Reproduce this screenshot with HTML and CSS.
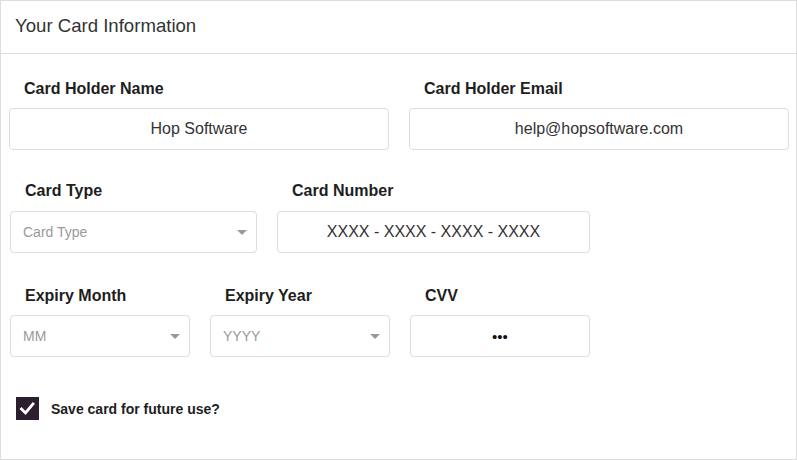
FILE: index.html
```html
<!DOCTYPE html>
<html lang="en">
<head>
<meta charset="utf-8">
<title>Your Card Information</title>
<link rel="stylesheet" href="styles.css">
</head>
<body>
<div class="card">
  <div class="card-header">Your Card Information</div>
  <div class="card-body">
    <div class="row row-1">
      <div class="field w380">
        <label class="label">Card Holder Name</label>
        <input class="control" type="text" value="Hop Software">
      </div>
      <div class="field w380">
        <label class="label">Card Holder Email</label>
        <input class="control" type="text" value="help@hopsoftware.com">
      </div>
    </div>
    <div class="row row-2">
      <div class="field w247">
        <label class="label">Card Type</label>
        <div class="select-wrap">
          <select class="control select"><option>Card Type</option></select>
        </div>
      </div>
      <div class="field w313">
        <label class="label">Card Number</label>
        <input class="control" type="text" value="XXXX - XXXX - XXXX - XXXX">
      </div>
    </div>
    <div class="row row-3">
      <div class="field w180">
        <label class="label">Expiry Month</label>
        <div class="select-wrap">
          <select class="control select"><option>MM</option></select>
        </div>
      </div>
      <div class="field w180">
        <label class="label">Expiry Year</label>
        <div class="select-wrap">
          <select class="control select"><option>YYYY</option></select>
        </div>
      </div>
      <div class="field w180">
        <label class="label">CVV</label>
        <input class="control" type="password" value="123">
      </div>
    </div>
    <div class="save-row">
      <span class="checkbox">
        <svg width="23" height="23" viewBox="0 0 23 23"><path d="M5.5 12 L9.5 16 L17 7" fill="none" stroke="#fff" stroke-width="2.8" stroke-linecap="square"/></svg>
      </span>
      <span class="save-label">Save card for future use?</span>
    </div>
  </div>
</div>
</body>
</html>
```
FILE: styles.css
```css
* { box-sizing: border-box; }
html, body { margin: 0; padding: 0; background: #fff; }
body { font-family: "Liberation Sans", Arial, sans-serif; }

.card {
  width: 797px;
  height: 460px;
  border: 1px solid #dddddd;
  background: #fff;
}

.card-header {
  height: 53px;
  border-bottom: 1px solid #dddddd;
  padding: 14px 0 0 14px;
  font-size: 18.6px;
  line-height: 22px;
  color: #333333;
}

.card-body {
  padding-top: 24px;
}

.row {
  display: flex;
  gap: 20px;
}
.row-1 { padding-left: 8px; }
.row-2 { padding-left: 9px; margin-top: 30px; }
.row-3 { padding-left: 9px; margin-top: 32px; }

.field { display: flex; flex-direction: column; }
.w380 { width: 380px; }
.w247 { width: 247px; }
.w313 { width: 313px; }
.w180 { width: 180px; }

.label {
  display: block;
  font-size: 16px;
  line-height: 20px;
  font-weight: bold;
  color: #1e1e1e;
  padding: 1px 0 0 15px;
  margin-bottom: 9px;
}
.row-2 .label { margin-bottom: 10px; }

.control {
  display: block;
  width: 100%;
  height: 42px;
  margin: 0;
  border: 1px solid #dddddd;
  border-radius: 4px;
  background: #fff;
  font-family: "Liberation Sans", Arial, sans-serif;
  font-size: 16px;
  color: #333333;
  text-align: center;
  outline: none;
  padding: 0 8px;
}

input[type="password"] {
  font-size: 15px;
  color: #111;
}

.select-wrap { position: relative; }
.select {
  -webkit-appearance: none;
  appearance: none;
  text-align: left;
  padding-left: 12px;
  font-size: 14px;
  color: #9a9a9a;
}
.select-wrap::after {
  content: "";
  position: absolute;
  right: 10px;
  top: 19px;
  width: 0;
  height: 0;
  border-left: 5px solid transparent;
  border-right: 5px solid transparent;
  border-top: 5px solid #999999;
  pointer-events: none;
}

.save-row {
  display: flex;
  align-items: center;
  margin-top: 40px;
  padding-left: 15px;
}

.checkbox {
  display: block;
  width: 23px;
  height: 23px;
  background: #2b1e2f;
  border: 0;
}
.checkbox svg { display: block; }

.save-label {
  margin-left: 12px;
  font-size: 14px;
  font-weight: bold;
  color: #1e1e1e;
  line-height: 18px;
}
```
